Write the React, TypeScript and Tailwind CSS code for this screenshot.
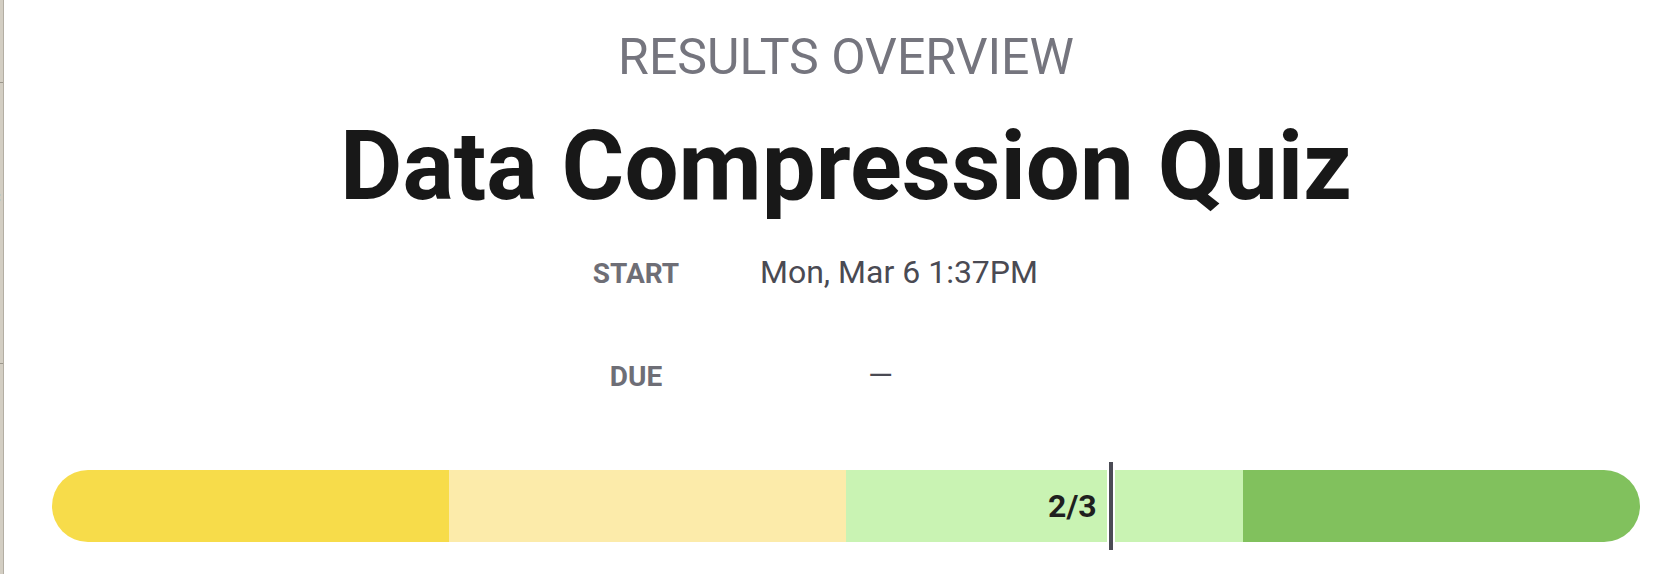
const segments = ["bg-[#f7dc4a]", "bg-[#fcebaa]", "bg-[#c9f3b3]", "bg-[#81c15d]"];

const EdgeStrip: React.FC = () => {
    return (
        <div className="w-[4px] shrink-0 flex flex-col overflow-hidden bg-[#d3cec3] border-r border-[#b3aea3]">
            <div className="h-[82px]"></div>
            <div className="h-[1px] bg-[#9c978c]"></div>
            <div className="h-[34px]"></div>
            <span className="-ml-[8px] text-[15px] font-bold leading-none text-[#2c6cb4]">a</span>
            <div className="h-[58px]"></div>
            <span className="-ml-[7px] text-[15px] font-bold leading-none text-[#2c6cb4]">&lt;</span>
            <div className="h-[158px]"></div>
            <div className="h-[1px] bg-[#9c978c]"></div>
        </div>
    );
};

const App: React.FC = () => {
    return (
        <div className="flex min-h-[574px] bg-white font-['Roboto',_'Liberation_Sans',_sans-serif]">
            <EdgeStrip />
            <div className="flex-1 pl-[48px] pr-[20px] pt-[32px]">
                <div className="text-center text-[50px] leading-none text-[#75757e]">RESULTS OVERVIEW</div>
                <h1 className="mt-[36px] text-center text-[96px] font-bold leading-none text-[#181818]">
                    Data Compression Quiz
                </h1>

                <div className="mx-auto mt-[42px] grid w-[560px] grid-cols-[140px_420px] items-baseline gap-y-[71px] leading-none">
                    <div className="text-center text-[28px] font-bold text-[#6e6e76]">START</div>
                    <div className="pl-[54px] text-[32px] text-[#4a4a53]">Mon, Mar 6 1:37PM</div>
                    <div className="text-center text-[28px] font-bold text-[#6e6e76]">DUE</div>
                    <div className="pl-[162px] text-[32px] text-[#4a4a53]">—</div>
                </div>

                <div className="relative mt-[79px]">
                    <div className="flex h-[72px] overflow-hidden rounded-full">
                        {segments.map((c, i) => (
                            <div key={i} className={`flex-1 ${c}`}></div>
                        ))}
                    </div>
                    <div className="absolute top-0 right-[calc(33.333%+14px)] flex h-[72px] items-center text-[32px] font-bold leading-none text-[#1f1f1f]">
                        2/3
                    </div>
                    <div className="absolute -top-[8px] left-[66.667%] h-[88px] w-[8px] -translate-x-1/2 border-x-2 border-white bg-[#4b4b55]"></div>
                </div>
            </div>
        </div>
    );
};

export default App;
